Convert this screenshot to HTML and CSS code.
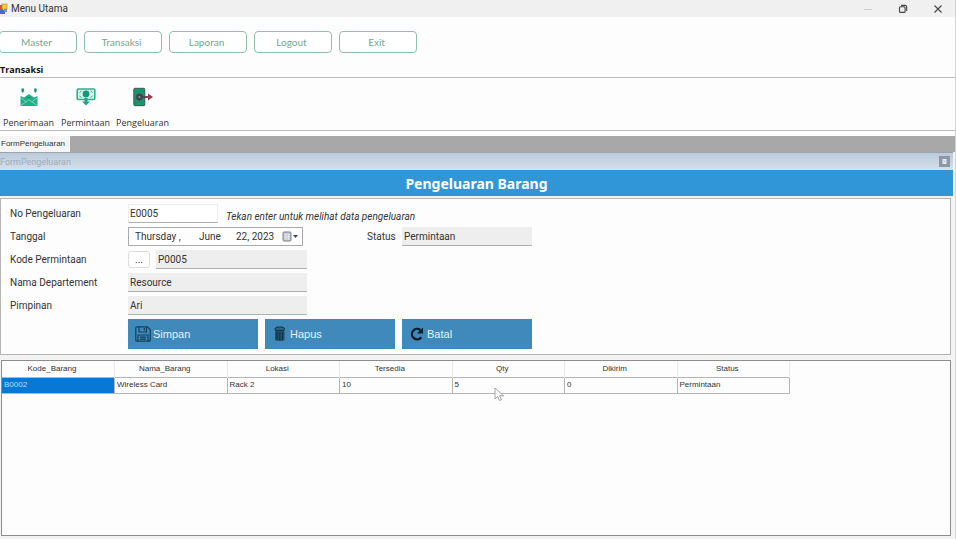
FILE: index.html
```html
<!DOCTYPE html>
<html lang="id">
<head>
<meta charset="utf-8">
<title>Menu Utama</title>
<link rel="stylesheet" href="styles.css">
</head>
<body>
<div class="window">
  <header class="titlebar">
    <svg class="app-icon" width="8" height="12" viewBox="0 0 8 12" aria-hidden="true">
      <rect x="0" y="2" width="3" height="5" fill="#c9572f"/>
      <rect x="2" y="1" width="5" height="5" fill="#f3c64c" stroke="#b98a1c" stroke-width=".6"/>
      <rect x="0" y="7" width="5" height="4" fill="#3c6fd0"/>
      <rect x="4" y="6" width="3" height="3" fill="#7d93c8"/>
    </svg>
    <span class="titlebar-text">Menu Utama</span>
    <div class="window-controls">
      <button type="button" aria-label="Minimize"><svg width="10" height="10" viewBox="0 0 10 10"><path d="M1 5.5h8" stroke="#cfcfcf"/></svg></button>
      <button type="button" aria-label="Restore"><svg width="10" height="10" viewBox="0 0 10 10" fill="none" stroke="#444" stroke-width="1.1"><rect x="1.5" y="2.8" width="5.6" height="5.6" rx="1"/><path d="M3 1.4h4.2a1.5 1.5 0 0 1 1.5 1.5V7"/></svg></button>
      <button type="button" aria-label="Close"><svg width="10" height="10" viewBox="0 0 10 10"><path d="M1.5 1.5l7 7M8.500 1.500l-7 7" stroke="#444" stroke-width="1.1"/></svg></button>
    </div>
  </header>

  <nav class="menu">
    <button type="button">Master</button>
    <button type="button">Transaksi</button>
    <button type="button">Laporan</button>
    <button type="button">Logout</button>
    <button type="button">Exit</button>
  </nav>

  <h2 class="section-title">Transaksi</h2>
  <div class="toolbar">
    <button type="button">
      <svg width="20" height="20" viewBox="0 0 20 20" aria-hidden="true">
        <path d="M1.500 9L5 10.500 10 7l5 3.500L18.500 9v10h-17z" fill="#1fae87"/>
        <path d="M2 11l5.500 4M18 11l-5.500 4M2 18.500l5.500-4L10 12.800l2.500 1.700 5.500 4" fill="none" stroke="#b9ead9" stroke-width=".6"/>
        <path d="M8.500 10.500h3" stroke="#0d7d60" stroke-width="1"/>
        <path d="M2.500 1.500h2.400v2.700l-1.200 1.800-1.200-1.800zM15.200 1.500h2.400v2.700l-1.200 1.800-1.200-1.800z" fill="#188a70"/>
      </svg>
      <span>Penerimaan</span>
    </button>
    <button type="button">
      <svg width="20" height="20" viewBox="0 0 20 20" aria-hidden="true">
        <rect x="1.200" y="2" width="17.600" height="10.500" rx="1" fill="#d5f2e8" stroke="#25b58f" stroke-width="1.600"/>
        <path d="M3.500 5.500l2-1.500M16.500 5.500l-2-1.500M3.500 9l2 1.500M16.500 9l-2 1.500" stroke="#25b58f"/>
        <circle cx="10" cy="7" r="3.400" fill="#129a78"/>
        <path d="M8.500 11h3v3.500H14L10 18.500 6 14.500h2.500z" fill="#1da883"/>
      </svg>
      <span>Permintaan</span>
    </button>
    <button type="button">
      <svg width="20" height="20" viewBox="0 0 20 20" aria-hidden="true">
        <rect x=".8" y="1.300" width="11" height="17.400" rx="1" fill="#16956f" stroke="#35524c" stroke-width=".9"/>
        <circle cx="6.400" cy="10" r="3.200" fill="#2c4b55" stroke="#6d3547" stroke-width=".9"/>
        <circle cx="6.400" cy="10" r="1" fill="#6fa99c"/>
        <path d="M10 10h7" stroke="#6d3547" stroke-width="1.800"/>
        <path d="M15 6.600l5 3.400-5 3.400z" fill="#91404f"/>
      </svg>
      <span>Pengeluaran</span>
    </button>
  </div>

  <div class="tabs"><button type="button">FormPengeluaran</button></div>

  <main class="child">
    <div class="child-title">
      <span>FormPengeluaran</span>
      <button type="button" aria-label="Close form"><svg width="11" height="11" viewBox="0 0 11 11"><rect x="3.500" y="3" width="4" height="5" fill="#e9eef5"/><path d="M4.500 4.200l2 2.400M6.500 4.200l-2 2.400" stroke="#a3adba" stroke-width=".6"/></svg></button>
    </div>
    <h1 class="banner">Pengeluaran Barang</h1>

    <form class="panel">
      <div class="row">
        <label for="no">No Pengeluaran</label>
        <input id="no" class="field short editable" type="text" value="E0005">
        <em class="hint">Tekan enter untuk melihat data pengeluaran</em>
      </div>
      <div class="row">
        <label for="tanggal">Tanggal</label>
        <button id="tanggal" class="date" type="button">
          <span>Thursday ,</span><span>June</span><span>22, 2023</span>
          <svg width="17" height="12" viewBox="0 0 17 12" aria-hidden="true">
            <rect x="1" y="1" width="8" height="9" rx="1" fill="#c9cbd6" stroke="#7c7f8c"/>
            <path d="M2 3.500h6M2 6h6M4 4v5M6.500 4v5" stroke="#eef" stroke-width=".6"/>
            <path d="M11 4h5l-2.500 3z" fill="#444"/>
          </svg>
        </button>
        <label class="status-label" for="status">Status</label>
        <input id="status" class="field status" type="text" value="Permintaan" readonly>
      </div>
      <div class="row">
        <label for="kode">Kode Permintaan</label>
        <button class="browse" type="button" aria-label="Cari permintaan">...</button>
        <input id="kode" class="field code" type="text" value="P0005" readonly>
      </div>
      <div class="row">
        <label for="dept">Nama Departement</label>
        <input id="dept" class="field" type="text" value="Resource" readonly>
      </div>
      <div class="row">
        <label for="pimpinan">Pimpinan</label>
        <input id="pimpinan" class="field" type="text" value="Ari" readonly>
      </div>
      <div class="actions">
        <button type="button">
          <svg width="16" height="16" viewBox="0 0 16 16" fill="none" stroke="#123f5c" stroke-width="1.200" aria-hidden="true">
            <path d="M2 .8h10.500l2.700 2.700v10.700a1 1 0 0 1-1 1H1.800a1 1 0 0 1-1-1V2a1.200 1.200 0 0 1 1.200-1.200z"/>
            <path d="M4 1v5h7.500V1M9.300 2v2.500M3 15V9h10v6M5 11.200h6M5 13.200h6"/>
          </svg>
          <span>Simpan</span>
        </button>
        <button type="button">
          <svg width="16" height="16" viewBox="0 0 16 16" aria-hidden="true">
            <path d="M3 3h9.500v10.500c0 2-9.500 2-9.500 0z" fill="#214e68"/>
            <ellipse cx="7.750" cy="2.800" rx="5" ry="1.900" fill="#2d6384" stroke="#102f43"/>
            <path d="M5 6v7.500M7.800 6.500v7.500M10.500 6v7.500" stroke="#102f43"/>
          </svg>
          <span>Hapus</span>
        </button>
        <button type="button">
          <svg width="16" height="16" viewBox="0 0 16 16" aria-hidden="true">
            <path d="M12.300 11.300A5.200 5.200 0 1 1 11.300 4" fill="none" stroke="#0b1c28" stroke-width="2.300"/>
            <path d="M14 1.500v6H8z" fill="#0b1c28"/>
          </svg>
          <span>Batal</span>
        </button>
      </div>
    </form>

    <section class="grid">
      <table>
        <thead>
          <tr><th>Kode_Barang</th><th>Nama_Barang</th><th>Lokasi</th><th>Tersedia</th><th>Qty</th><th>Dikirim</th><th>Status</th></tr>
        </thead>
        <tbody>
          <tr><td class="selected">B0002</td><td>Wireless Card</td><td>Rack 2</td><td>10</td><td>5</td><td>0</td><td>Permintaan</td></tr>
        </tbody>
      </table>
    </section>
  </main>
  <svg class="pointer" width="11" height="15" viewBox="0 0 11 15" aria-hidden="true"><path d="M1 1v11l2.700-2.500 1.800 4 2-.9-1.800-3.800h4z" fill="#fff" stroke="#999" stroke-width=".9"/></svg>
</div>
</body>
</html>
```
FILE: styles.css
```css
* { box-sizing: border-box; }

body {
  margin: 0;
  background: #fdfdfd;
  color: #333;
  font: 10px/14px Roboto, "Open Sans", sans-serif;
}

button, input { font: inherit; color: inherit; margin: 0; }
button { padding: 0; border: 0; background: none; }
svg { display: block; flex: none; }

.window {
  position: relative;
  display: flex;
  flex-direction: column;
  min-height: 100vh;
  border-right: 1px solid #d4d4d4;
  overflow: hidden;
}

.titlebar {
  display: flex;
  align-items: center;
  height: 17px;
  background: #f0f0f0;
  font-size: 10px;
}
.titlebar-text { margin-left: 3px; }
.window-controls { display: flex; margin-left: auto; }
.window-controls button {
  display: grid;
  place-items: center;
  width: 35px;
  height: 17px;
}

.menu { display: flex; gap: 7px; margin: 14px 0 0 -1px; }
.menu button {
  width: 78px;
  height: 22px;
  border: 1px solid #8fbfaa;
  border-radius: 4px;
  color: #6fa98c;
  background: #fff;
  font: 10px/14px Lato, sans-serif;
  padding-right: 3px;
}

.section-title {
  margin: 10px 0 0;
  font: bold 9px/14px "Open Sans", sans-serif;
  color: #111;
}

.toolbar {
  display: flex;
  height: 54px;
  border: solid #bbb;
  border-width: 1px 0;
  padding-top: 9px;
}
.toolbar button {
  display: flex;
  flex-direction: column;
  align-items: center;
  gap: 9px;
  width: 57px;
  height: 43px;
  font: 9px/14px "Open Sans", sans-serif;
}

.tabs {
  height: 16px;
  margin-top: 5px;
  background: #a8a8a8;
}
.tabs button {
  width: 70px;
  height: 16px;
  background: #f5f5f5;
  text-align: left;
  padding-left: 1px;
  font: 8px/14px "Liberation Sans", sans-serif;
}

.child {
  display: flex;
  flex-direction: column;
  flex: 1;
  padding-right: 2px;
  background: #f3f3f3;
}
.child-title {
  display: flex;
  align-items: center;
  justify-content: space-between;
  height: 18px;
  padding: 0 3px 0 0;
  border-top: 1px solid #9ba4ad;
  background: linear-gradient(#bccbdb, #d3dfec);
  color: #9eabba;
  font-size: 9px;
}
.child-title button { background: #8d97a5; }

.banner {
  margin: 0;
  height: 26px;
  background: #3096d8;
  color: #fff;
  font: bold 14px/28px "Noto Sans", sans-serif;
  text-align: center;
}

.panel {
  display: flex;
  flex-direction: column;
  gap: 4px;
  margin: 2px 2px 5px 0;
  padding: 5px 9px;
  border: 1px solid #b5b5b5;
  background: #fdfdfd;
}
.row { display: flex; height: 19px; align-items: center; }
.row label:first-child { width: 118px; }

.field {
  width: 179px;
  height: 19px;
  padding: 0 2px;
  border: 0;
  border-bottom: 1px solid #b0b0b0;
  border-radius: 0;
  background: #eee;
}
.editable { background: #fff; border: 1px solid #eee; border-bottom-color: #b0b0b0; padding: 0 1px; }
.short { width: 90px; }
.code { width: 151px; margin-left: 6px; }
.status { width: 130px; }
.hint { margin: 6px 0 0 8px; }

.date {
  display: grid;
  grid-template-columns: 64px 37px 46px auto;
  align-items: center;
  width: 175px;
  height: 19px;
  padding-left: 6px;
  border: 1px solid #aaa;
  background: #fff;
  text-align: left;
}
.status-label { width: 35px; margin-left: 64px; }

.browse {
  width: 22px;
  height: 17px;
  border: 1px solid #ddd;
  border-radius: 3px;
  background: #fff;
}

.actions { display: flex; gap: 7px; margin-left: 118px; }
.actions button {
  display: flex;
  align-items: center;
  gap: 2px;
  width: 130px;
  height: 30px;
  padding-left: 7px;
  background: #3f8abb;
  color: #e6f1f8;
  font: 11px/14px "Liberation Sans", sans-serif;
}

.grid {
  flex: 1;
  margin: 0 2px 3px 1px;
  border: 1px solid #8c8c8c;
  background: #fdfdfd;
}
.grid table {
  width: 788px;
  max-width: 100%;
  table-layout: fixed;
  border-collapse: collapse;
  font: 8px/14px "Liberation Sans", sans-serif;
}
.grid th, .grid td { padding: 0 2px; height: 16px; }
.grid th { font-weight: 400; border-right: 1px solid #e8e8e8; padding-right: 14px; }
.grid td { border: 1px solid #b5b5b5; }
.grid td:first-child { border-left: 0; }
.grid .selected { background: #0878d4; color: #b9dcf7; }

.pointer { position: absolute; left: 494px; top: 387px; }
```
